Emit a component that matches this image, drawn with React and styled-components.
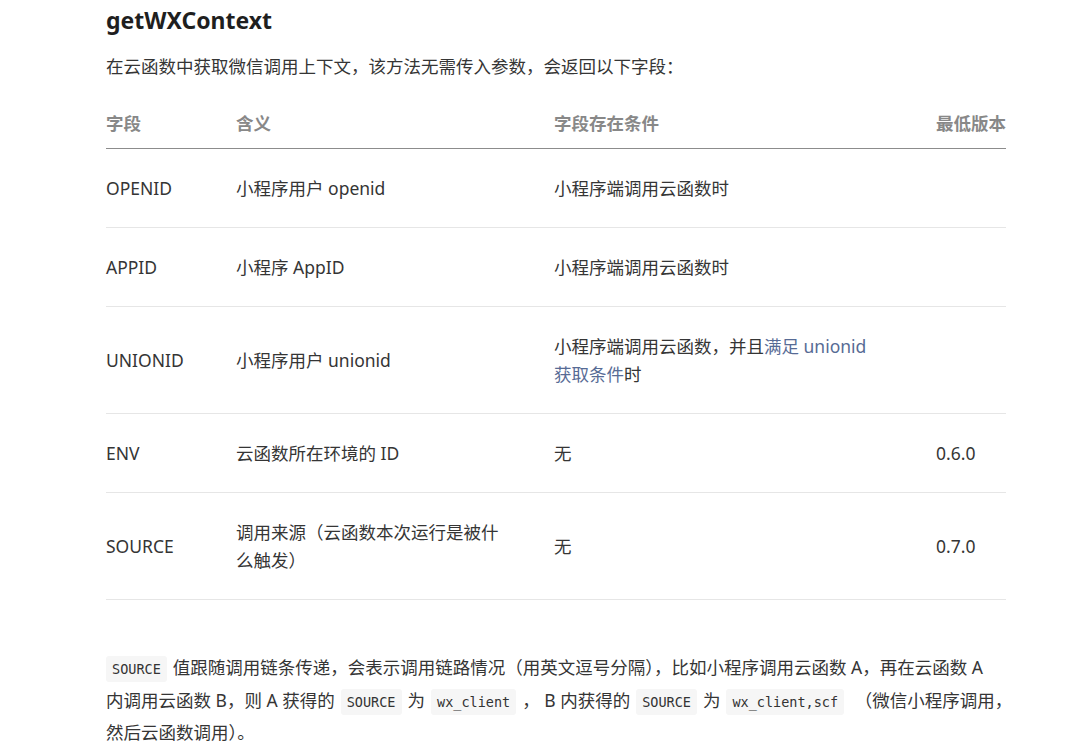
import React from 'react'
import styled, {createGlobalStyle} from 'styled-components'

const Global = createGlobalStyle`
    body {
        margin: 0;
        background: #fff;
        font-family: "Noto Sans", "Noto Sans CJK SC", sans-serif;
        color: #353535;
    }
`

const Page = styled.div`
    width: 900px;
    padding-left: 106px;
    font-size: 17.5px;
`

const Title = styled.h2`
    margin: 0;
    padding-top: 4px;
    font-size: 23px;
    line-height: 32px;
    font-weight: 700;
    color: #1f1f1f;
`

const Intro = styled.p`
    margin: 16px 0 0;
    line-height: 28px;
`

const Table = styled.table`
    width: 900px;
    margin-top: 18px;
    border-collapse: collapse;
    table-layout: fixed;
`

const Th = styled.th`
    padding: 11px ${props => props.$pr || 0}px 11px 0;
    text-align: ${props => props.$right ? 'right' : 'left'};
    font-weight: 700;
    color: #888;
    line-height: 28px;
    border-bottom: 1px solid #8c8c8c;
`

const Td = styled.td`
    padding: 25px ${props => props.$pr || 0}px 25px 0;
    line-height: 28px;
    vertical-align: middle;
    border-bottom: 1px solid #e6e6e6;
`

const Link = styled.span`
    color: #576b95;
`

const Note = styled.p`
    margin: ${props => props.$gap || 52}px 0 0;
    line-height: 30.6px;
    white-space: nowrap;
`

const Code = styled.code`
    font-family: "DejaVu Sans Mono", "Liberation Mono", monospace;
    font-size: 13.5px;
    background: #f6f6f6;
    color: #333;
    padding: 5px 6px;
    margin: 0 6px;
    border-radius: 3px;
    &:first-child {
        margin-left: 0;
    }
`

const rows = [
    {field: 'OPENID', desc: '小程序用户 openid', cond: '小程序端调用云函数时', ver: ''},
    {field: 'APPID', desc: '小程序 AppID', cond: '小程序端调用云函数时', ver: ''},
    {field: 'UNIONID', desc: '小程序用户 unionid', cond: (<>小程序端调用云函数，并且<Link>满足 unionid 获取条件</Link>时</>), ver: ''},
    {field: 'ENV', desc: '云函数所在环境的 ID', cond: '无', ver: '0.6.0'},
    {field: 'SOURCE', desc: '调用来源（云函数本次运行是被什么触发）', cond: '无', ver: '0.7.0'},
]

const App = () => {
    return(
        <>
        <Global />
        <Page>
            <Title>getWXContext</Title>
            <Intro>在云函数中获取微信调用上下文，该方法无需传入参数，会返回以下字段：</Intro>
            <Table>
                <colgroup>
                    <col style={{width: 130}} />
                    <col style={{width: 318}} />
                    <col style={{width: 382}} />
                    <col style={{width: 70}} />
                </colgroup>
                <thead>
                    <tr>
                        <Th>字段</Th>
                        <Th $pr={50}>含义</Th>
                        <Th $pr={60}>字段存在条件</Th>
                        <Th $right>最低版本</Th>
                    </tr>
                </thead>
                <tbody>
                    {rows.map(r => (
                        <tr key={r.field}>
                            <Td>{r.field}</Td>
                            <Td $pr={50}>{r.desc}</Td>
                            <Td $pr={60}>{r.cond}</Td>
                            <Td>{r.ver}</Td>
                        </tr>
                    ))}
                </tbody>
            </Table>
            <Note>
                <Code>SOURCE</Code>值跟随调用链条传递，会表示调用链路情况（用英文逗号分隔），比如小程序调用云函数 A，再在云函数 A<br />
                内调用云函数 B，则 A 获得的<Code>SOURCE</Code>为<Code>wx_client</Code>， B 内获得的<Code>SOURCE</Code>为<Code>wx_client,scf</Code> （微信小程序调用，<br />
                然后云函数调用）。
            </Note>
            <Note $gap={6}>
                <Code>SOURCE</Code>
            </Note>
        </Page>
        </>
    );
}

export default App
